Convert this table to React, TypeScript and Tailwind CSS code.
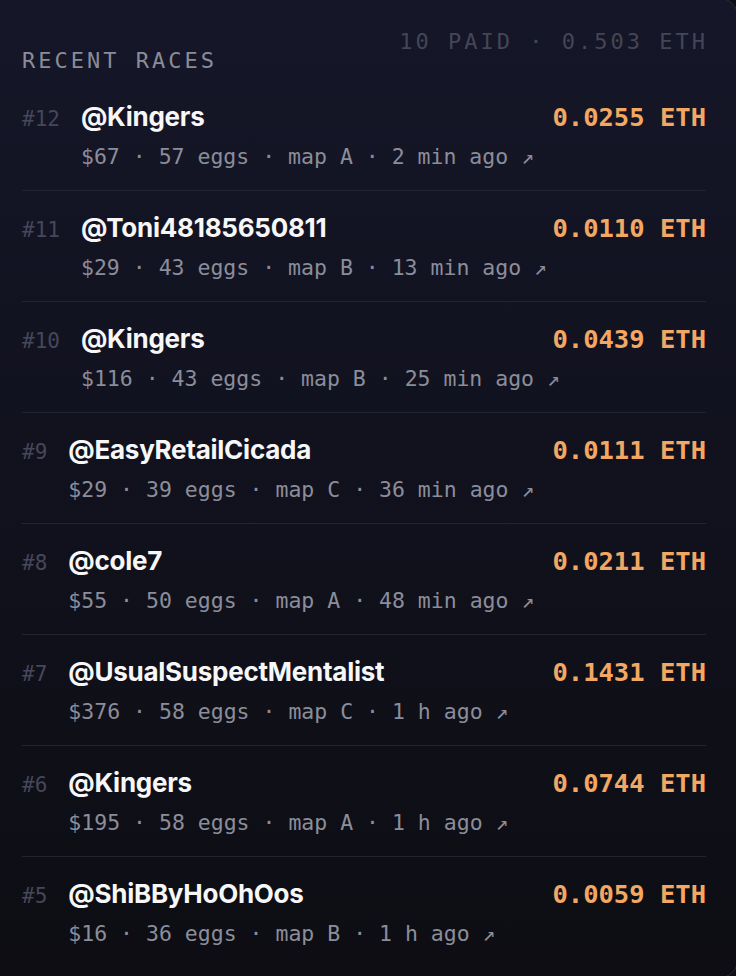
import React from "react";

type Race = {
  id: number;
  name: string;
  usd: number;
  eggs: number;
  map: string;
  ago: string;
  eth: string;
};

const races: Race[] = [
  { id: 12, name: "@Kingers", usd: 67, eggs: 57, map: "A", ago: "2 min ago", eth: "0.0255" },
  { id: 11, name: "@Toni48185650811", usd: 29, eggs: 43, map: "B", ago: "13 min ago", eth: "0.0110" },
  { id: 10, name: "@Kingers", usd: 116, eggs: 43, map: "B", ago: "25 min ago", eth: "0.0439" },
  { id: 9, name: "@EasyRetailCicada", usd: 29, eggs: 39, map: "C", ago: "36 min ago", eth: "0.0111" },
  { id: 8, name: "@cole7", usd: 55, eggs: 50, map: "A", ago: "48 min ago", eth: "0.0211" },
  { id: 7, name: "@UsualSuspectMentalist", usd: 376, eggs: 58, map: "C", ago: "1 h ago", eth: "0.1431" },
  { id: 6, name: "@Kingers", usd: 195, eggs: 58, map: "A", ago: "1 h ago", eth: "0.0744" },
  { id: 5, name: "@ShiBByHoOhOos", usd: 16, eggs: 36, map: "B", ago: "1 h ago", eth: "0.0059" },
];

const mono = "font-['DejaVu_Sans_Mono','Liberation_Mono',monospace]";

export default function App() {
  return (
    <div className="w-[736px] h-[976px] overflow-hidden bg-[#0e0e15]">
      <div className="-mt-[2px] -mr-[2px] -ml-[20px] h-[980px] rounded-[18px] border border-[#2a2b3a] bg-gradient-to-b from-[#151628] to-[#0d0d13] pl-[41px] pr-[31px]">
        <div className={`flex justify-between items-start ${mono} text-[22px] tracking-[3px] leading-[22px] whitespace-nowrap`}>
          <div className="mt-[51px] text-[#8a8c99]">RECENT RACES</div>
          <div className="mt-[32px] text-[#444655] -mr-[2px]">10 PAID · 0.503 ETH</div>
        </div>
        <div className="mt-[8px]">
          {races.map((r, i) => (
            <div
              key={r.id}
              className={`flex justify-between items-baseline pt-[21px] pb-[19px] ${i < races.length - 1 ? "border-b border-[#23242f]" : ""}`}
            >
              <div className="flex flex-1 min-w-0 items-baseline gap-[21px]">
                <div className={`${mono} shrink-0 text-[21px] text-[#45475a]`}>#{r.id}</div>
                <div className="flex flex-col min-w-0">
                  <div className="font-['Inter','Noto_Sans',sans-serif] font-bold text-[26px] leading-[32px] text-[#f7f7f8] tracking-[-0.01em] whitespace-nowrap">
                    {r.name}
                  </div>
                  <div className={`${mono} text-[21.5px] leading-[28px] text-[#8b8d9a] mt-[10px] whitespace-nowrap`}>
                    ${r.usd} · {r.eggs} eggs · map {r.map} · {r.ago} <span className="text-[21px]">↗</span>
                  </div>
                </div>
              </div>
              <div className={`${mono} shrink-0 whitespace-nowrap font-bold text-[25.5px] leading-[32px] text-[#f2a863]`}>
                {r.eth} ETH
              </div>
            </div>
          ))}
        </div>
      </div>
    </div>
  );
}
